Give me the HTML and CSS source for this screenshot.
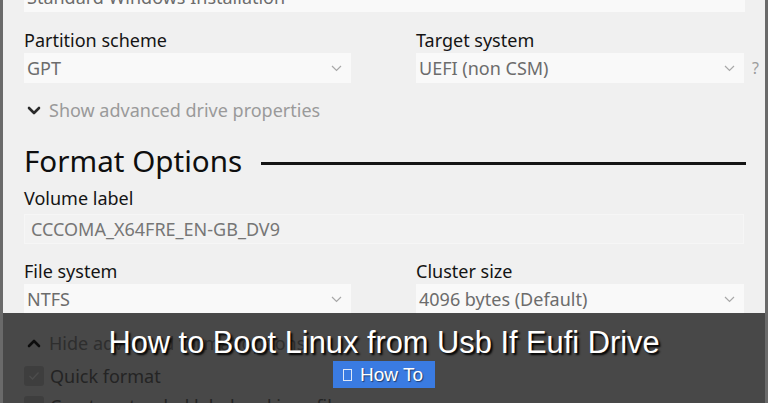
FILE: index.html
```html
<!DOCTYPE html>
<html lang="en">
<head>
<meta charset="utf-8">
<title>How to Boot Linux from Usb If Eufi Drive</title>
<link rel="stylesheet" href="styles.css">
</head>
<body>
<div class="window">
  <div class="content">
    <div class="field wide"><span class="value">Standard Windows Installation</span></div>

    <div class="pair">
      <div class="cell">
        <div class="label">Partition scheme</div>
        <div class="field select"><span class="value">GPT</span><svg class="chev" width="11" height="7" viewBox="0 0 11 7"><path d="M1 1 L5.5 5.5 L10 1" fill="none" stroke="#a8a8a8" stroke-width="1.2"/></svg></div>
      </div>
      <div class="cell">
        <div class="label">Target system</div>
        <div class="select-row">
          <div class="field select"><span class="value">UEFI (non CSM)</span><svg class="chev" width="11" height="7" viewBox="0 0 11 7"><path d="M1 1 L5.5 5.5 L10 1" fill="none" stroke="#a8a8a8" stroke-width="1.2"/></svg></div>
          <span class="help">?</span>
        </div>
      </div>
    </div>

    <div class="toggle">
      <svg class="tchev" width="14" height="9" viewBox="0 0 14 9"><path d="M2 2 L7 7 L12 2" fill="none" stroke="#2a2a2a" stroke-width="2.6" stroke-linecap="round" stroke-linejoin="round"/></svg>
      <span>Show advanced drive properties</span>
    </div>

    <div class="heading">
      <h2>Format Options</h2>
      <div class="rule"></div>
    </div>

    <div class="label">Volume label</div>
    <div class="field input"><span class="value">CCCOMA_X64FRE_EN-GB_DV9</span></div>

    <div class="pair pair2">
      <div class="cell">
        <div class="label">File system</div>
        <div class="field select"><span class="value">NTFS</span><svg class="chev" width="11" height="7" viewBox="0 0 11 7"><path d="M1 1 L5.5 5.5 L10 1" fill="none" stroke="#a8a8a8" stroke-width="1.2"/></svg></div>
      </div>
      <div class="cell">
        <div class="label">Cluster size</div>
        <div class="field select"><span class="value">4096 bytes (Default)</span><svg class="chev" width="11" height="7" viewBox="0 0 11 7"><path d="M1 1 L5.5 5.5 L10 1" fill="none" stroke="#a8a8a8" stroke-width="1.2"/></svg></div>
      </div>
    </div>

    <div class="toggle toggle2">
      <svg class="tchev" width="14" height="9" viewBox="0 0 14 9"><path d="M2 7 L7 2 L12 7" fill="none" stroke="#2a2a2a" stroke-width="2.6" stroke-linecap="round" stroke-linejoin="round"/></svg>
      <span>Hide advanced format options</span>
    </div>

    <div class="check">
      <span class="box"><svg width="12" height="10" viewBox="0 0 12 10"><path d="M1.5 5 L4.5 8 L10.5 1.5" fill="none" stroke="#ffffff" stroke-width="1.3"/></svg></span>
      <span>Quick format</span>
    </div>
    <div class="check">
      <span class="box"></span>
      <span>Create extended label and icon files</span>
    </div>
  </div>

  <div class="overlay">
    <div class="title">How to Boot Linux from Usb If Eufi Drive</div>
    <div class="badge"><span class="tofu"></span>How To</div>
  </div>
</div>
</body>
</html>
```
FILE: styles.css
```css
* { box-sizing: border-box; }
html, body { margin: 0; padding: 0; }
body {
  width: 768px;
  height: 403px;
  overflow: hidden;
  background: #f0f0f0;
  font-family: "Noto Sans", "Open Sans", sans-serif;
}
.window {
  position: relative;
  width: 768px;
  height: 403px;
  overflow: hidden;
  background: #f0f0f0;
  border-left: 3px solid #6a6a6a;
  border-right: 3px solid #6a6a6a;
}
.content {
  padding-left: 21px;
  margin-top: -18px;
}
.field {
  height: 30px;
  background: #f9f9f9;
  display: flex;
  align-items: center;
  padding-left: 3px;
  padding-right: 9px;
}
.field.wide { width: 721px; }
.value {
  font-size: 18px;
  color: #6c6c6c;
  white-space: nowrap;
}
.field.select { justify-content: space-between; }
.chev { flex: none; margin-top: 1px; }
.label {
  font-size: 18px;
  color: #141414;
  height: 25px;
  line-height: 25px;
}
.pair {
  display: grid;
  grid-template-columns: 327px 328px;
  column-gap: 65px;
  margin-top: 16px;
}
.pair .field.select { width: 100%; }
.select-row { display: flex; align-items: center; }
.select-row .field { width: 328px; flex: none; }
.help {
  font-size: 16px;
  color: #9c9c9c;
  margin-left: 8px;
}
.toggle {
  display: flex;
  align-items: center;
  gap: 8px;
  margin-top: 14px;
  height: 26px;
  font-size: 18px;
  color: #9a9a9a;
  padding-left: 3px;
}
.heading {
  display: flex;
  align-items: center;
  width: 722px;
  margin-top: 21px;
}
.heading h2 {
  margin: 0;
  font-size: 29.6px;
  font-weight: 400;
  color: #0e0e0e;
  line-height: 34px;
}
.rule {
  flex: 1;
  height: 3px;
  background: #141414;
  margin-left: 19px;
  margin-top: 4px;
}
.heading + .label { margin-top: 8px; }
.field.input {
  width: 720px;
  margin-top: 3px;
  background: #f2f2f2;
  border: 1px solid #f6f6f6;
  padding-left: 6px;
}
.field.input .value { color: #767676; }
.pair2 { margin-top: 15px; }
.toggle2 { margin-top: 16px; }
.check {
  display: flex;
  align-items: center;
  gap: 6px;
  font-size: 18px;
  color: #7a7a7a;
  height: 22px;
  margin-top: 9px;
}
.check + .check { margin-top: 8px; }
.box {
  width: 20px;
  height: 20px;
  border-radius: 3px;
  background: #cfcfcf;
  display: flex;
  align-items: center;
  justify-content: center;
}
.overlay {
  position: absolute;
  left: -3px;
  right: -3px;
  bottom: 0;
  height: 90px;
  background: rgba(0, 0, 0, 0.7);
  display: flex;
  flex-direction: column;
  align-items: center;
}
.title {
  margin-top: 12px;
  font-family: "Liberation Sans", Arial, sans-serif;
  font-size: 30.8px;
  line-height: 35px;
  color: #ffffff;
  text-shadow: 2px 2px 2px #000;
  white-space: nowrap;
}
.badge {
  margin-top: 1px;
  background: #3a7be2;
  color: #ffffff;
  font-family: "Liberation Sans", Arial, sans-serif;
  font-size: 19px;
  height: 27px;
  padding: 0 12px 0 10px;
  display: flex;
  align-items: center;
  gap: 8px;
  text-shadow: 1px 1px 1px rgba(0,0,0,0.5);
}
.tofu {
  width: 9px;
  height: 12px;
  border: 1px solid #dfe8f8;
  display: inline-block;
}
```
